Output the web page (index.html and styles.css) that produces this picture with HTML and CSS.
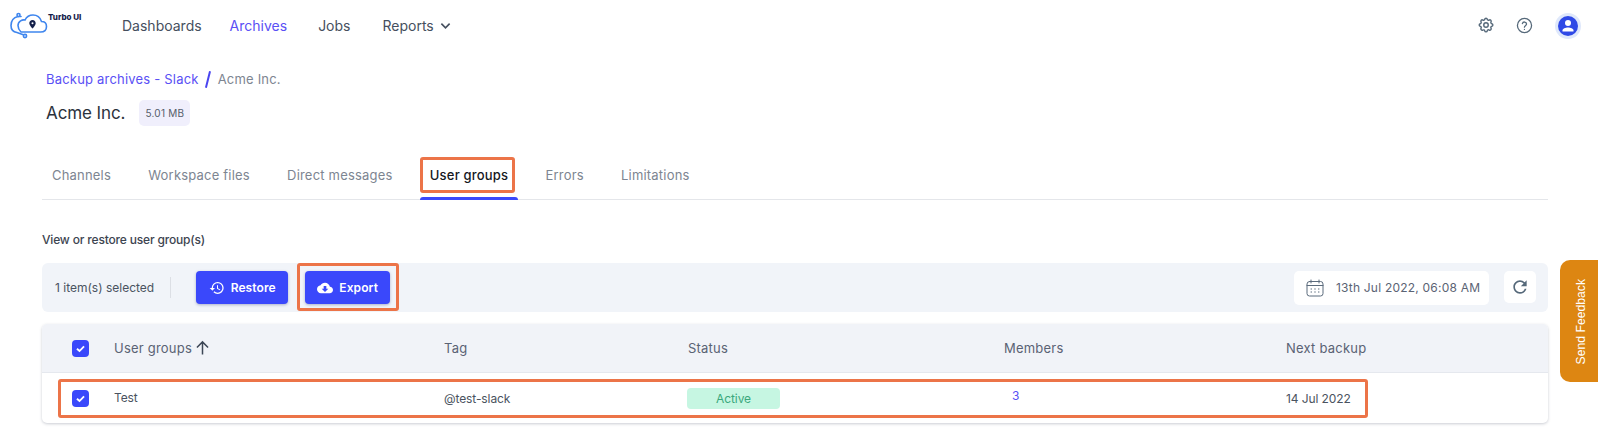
FILE: index.html
```html
<!DOCTYPE html>
<html lang="en">
<head>
<meta charset="utf-8">
<title>Turbo UI</title>
<link rel="stylesheet" href="styles.css">
</head>
<body>
<header class="topbar">
  <a class="brand">
    <svg class="logo" viewBox="0 0 38 28" fill="none" stroke="#3f86ee" stroke-width="1.6" stroke-linecap="round" aria-hidden="true">
      <path d="M8 5.5C4 6.5 1 9.500 1 14.500C1 18.500 3.500 21 7 21.500L14 24"/>
      <path d="M8 5.500H11"/>
      <circle cx="8.500" cy="4" r="1.500" fill="#fff"/>
      <path d="M11 21H30.500C34.500 21 36.500 18.500 36.500 15.500C36.500 12.500 34.500 10.500 31.500 10.500C30 6 27 4 23 4C19 4 16.500 6 15 9C12.500 8.500 8 10 8 14.500C8 17.500 9.500 19.500 11 21Z"/>
      <circle cx="15" cy="25" r="1.600" fill="#fff"/>
      <path d="M22.500 9C20.600 9 19.300 10.400 19.300 12.200C19.300 14.300 22.500 17.500 22.500 17.500C22.500 17.500 25.700 14.300 25.700 12.200C25.700 10.400 24.400 9 22.500 9Z" fill="#14204a" stroke="none"/>
      <circle cx="22.500" cy="12.200" r="1" fill="#fff" stroke="none"/>
    </svg>
    <span class="brand-name">Turbo UI</span>
  </a>
  <nav class="mainnav">
    <a>Dashboards</a>
    <a class="current">Archives</a>
    <a>Jobs</a>
    <a class="has-menu">Reports
      <svg class="chev" viewBox="0 0 12 8" fill="none" stroke="#454f5e" stroke-width="1.800" aria-hidden="true"><path d="M1.500 1.500L6 6L10.500 1.500"/></svg>
    </a>
  </nav>
  <div class="top-icons">
    <svg class="ic-gear" viewBox="0 0 24 24" fill="none" stroke="#56697a" stroke-width="1.900" stroke-linejoin="round" aria-hidden="true">
      <path d="M10.300 4.300c.4-1.800 3-1.800 3.400 0a1.700 1.700 0 0 0 2.600 1.100c1.500-.9 3.300.8 2.400 2.400a1.700 1.700 0 0 0 1.100 2.500c1.800.4 1.800 3 0 3.400a1.700 1.700 0 0 0-1.100 2.600c.9 1.500-.9 3.300-2.400 2.400a1.700 1.700 0 0 0-2.600 1.100c-.4 1.800-3 1.800-3.400 0a1.700 1.700 0 0 0-2.500-1.100c-1.600.9-3.300-.9-2.400-2.400a1.700 1.700 0 0 0-1.100-2.600c-1.800-.4-1.800-3 0-3.400a1.700 1.700 0 0 0 1.100-2.500c-.9-1.600.8-3.300 2.400-2.400 1 .6 2.300.1 2.500-1.100z"/>
      <circle cx="12" cy="12" r="3"/>
    </svg>
    <svg class="ic-help" viewBox="0 0 24 24" fill="none" stroke="#56697a" stroke-width="1.800" stroke-linecap="round" aria-hidden="true">
      <circle cx="12" cy="12" r="10"/>
      <path d="M9 9.300a3 3 0 0 1 5.900.7c0 2-3 2.600-3 4.300"/>
      <path d="M11.900 17.500v.1"/>
    </svg>
    <span class="avatar">
      <svg viewBox="0 0 20 20" fill="#fff" aria-hidden="true">
        <circle cx="10" cy="7" r="3"/>
        <path d="M4.500 14.500c0-2 3-3 5.500-3s5.500 1 5.500 3v1h-11z"/>
      </svg>
    </span>
  </div>
</header>

<main class="page">
  <div class="crumbs">
    <a>Backup archives - Slack</a>
    <span class="slash"></span>
    <span class="crumb-now">Acme Inc.</span>
  </div>
  <div class="title-row">
    <h1>Acme Inc.</h1>
    <span class="size">5.01 MB</span>
  </div>

  <div class="tabs">
    <a>Channels</a>
    <a>Workspace files</a>
    <a>Direct messages</a>
    <a class="active">User groups</a>
    <a>Errors</a>
    <a>Limitations</a>
  </div>

  <p class="hint">View or restore user group(s)</p>

  <div class="toolbar">
    <span class="count">1 item(s) selected</span>
    <span class="divider"></span>
    <button class="btn btn-restore">
      <svg viewBox="0 0 24 24" fill="#fff" aria-hidden="true"><path d="M13 3a9 9 0 0 0-9 9H1l3.890 3.890.070.140L9 12H6c0-3.870 3.130-7 7-7s7 3.130 7 7-3.130 7-7 7c-1.930 0-3.680-.790-4.940-2.060l-1.420 1.420A8.954 8.954 0 0 0 13 21a9 9 0 0 0 0-18zm-1 5v5l4.280 2.540.720-1.210-3.500-2.080V8H12z"/></svg>
      Restore
    </button>
    <button class="btn btn-export">
      <svg viewBox="0 0 24 24" fill="#fff" aria-hidden="true"><path d="M19.350 10.040C18.670 6.590 15.640 4 12 4 9.110 4 6.600 5.640 5.350 8.040 2.340 8.360 0 10.910 0 14c0 3.310 2.690 6 6 6h13c2.760 0 5-2.240 5-5 0-2.640-2.050-4.780-4.650-4.960zM17 13l-5 5-5-5h3V9h4v4h3z"/></svg>
      Export
    </button>
    <div class="date-box">
      <svg viewBox="0 0 18 18" fill="none" stroke="#5b6b7c" stroke-width="1" stroke-linecap="round" aria-hidden="true">
        <rect x="1" y="2.500" width="16" height="14.500" rx="2.500"/>
        <path d="M1 6.500H17M5 1V4M13 1V4"/>
        <path d="M5 10H5.600M8.700 10H9.300M12.400 10H13M5 13H5.600M8.700 13H9.300M12.400 13H13"/>
      </svg>
      <span>13th Jul 2022, 06:08 AM</span>
    </div>
    <button class="refresh">
      <svg viewBox="0 0 24 24" fill="#56697a" aria-hidden="true"><path d="M17.650 6.350A7.958 7.958 0 0 0 12 4c-4.420 0-7.990 3.580-7.990 8s3.570 8 7.990 8c3.730 0 6.840-2.550 7.730-6h-2.080A5.990 5.990 0 0 1 12 18c-3.310 0-6-2.690-6-6s2.690-6 6-6c1.660 0 3.140.690 4.220 1.780L13 11h7V4l-2.350 2.350z"/></svg>
    </button>
  </div>

  <div class="table">
    <div class="tr thead">
      <span class="check"><svg viewBox="0 0 12 12" fill="none" stroke="#fff" stroke-width="1.300"><path d="M3.500 6.200L5.300 7.800L8.500 4.500"/></svg></span>
      <span class="th-sort">User groups
        <svg viewBox="0 0 14 14" fill="none" stroke="#3c4656" stroke-width="1.400" aria-hidden="true"><path d="M7 13V1.500M1.800 6.500L7 1.300L12.200 6.500"/></svg>
      </span>
      <span>Tag</span>
      <span>Status</span>
      <span>Members</span>
      <span>Next backup</span>
    </div>
    <div class="tr tbody">
      <span class="check"><svg viewBox="0 0 12 12" fill="none" stroke="#fff" stroke-width="1.300"><path d="M3.500 6.200L5.300 7.800L8.500 4.500"/></svg></span>
      <span class="name">Test</span>
      <span>@test-slack</span>
      <span><span class="pill">Active</span></span>
      <span><a class="member-link">3</a></span>
      <span>14 Jul 2022</span>
    </div>
  </div>
</main>

<div class="mark mark-tab"></div>
<div class="mark mark-export"></div>
<div class="mark mark-row"></div>

<a class="feedback"><span>Send Feedback</span></a>
</body>
</html>
```
FILE: styles.css
```css
* { box-sizing: border-box; }
html, body { margin: 0; padding: 0; }
body {
  width: 1600px;
  height: 442px;
  overflow: hidden;
  position: relative;
  background: #fff;
  font-family: Inter, "Liberation Sans", sans-serif;
  color: #454f5e;
}
a { text-decoration: none; color: inherit; }

.topbar {
  display: flex;
  align-items: center;
  height: 50px;
  padding: 0 22px 0 10px;
}
.brand { display: flex; align-items: flex-start; width: 112px; height: 27px; margin-top: -1px; }
.logo { width: 38px; height: 28px; }
.brand-name {
  font-size: 8px;
  font-weight: 800;
  color: #14204a;
  margin-top: 1px;
  white-space: nowrap;
}
.mainnav { display: flex; align-items: center; gap: 28px; font-size: 14px; }
.mainnav .current { color: #5a50f5; margin-right: 3px; }
.mainnav .has-menu { display: flex; align-items: center; gap: 6px; margin-left: 4px; }
.chev { width: 11px; height: 8px; margin-top: 2px; }
.top-icons { margin-left: auto; display: flex; align-items: center; }
.ic-gear { width: 18px; height: 18px; margin-right: 21px; }
.ic-help { width: 17px; height: 17px; margin-right: 25px; }
.avatar {
  width: 20px;
  height: 20px;
  border-radius: 50%;
  background: #2f49e6;
  box-shadow: 0 0 0 3px #dfe8fb;
  display: block;
  margin-top: 2px;
}
.avatar svg { display: block; width: 20px; height: 20px; }

.page { padding: 0 52px 0 42px; }
.crumbs {
  display: flex;
  align-items: center;
  height: 20px;
  margin: 19px 0 0 4px;
  font-size: 13px;
  letter-spacing: .2px;
  color: #5a50f5;
}
.slash {
  width: 2px;
  height: 17px;
  margin: 0 9px 0 8px;
  background: #4a45f0;
  transform: rotate(14deg);
}
.crumb-now { color: #7d8591; }
.title-row { display: flex; align-items: center; gap: 14px; margin: 11px 0 0 4px; height: 26px; }
h1 { margin: 0; font-size: 17px; font-weight: 400; letter-spacing: -.1px; color: #2b323c; }
.size {
  display: flex;
  align-items: center;
  justify-content: center;
  width: 51px;
  height: 26px;
  border-radius: 5px;
  background: #f0effc;
  font-size: 10px;
  letter-spacing: .2px;
  color: #555d6a;
}

.tabs {
  display: flex;
  gap: 37.2px;
  height: 49px;
  margin-top: 25px;
  padding-left: 10px;
  border-bottom: 1px solid #e4e6ea;
  font-size: 13px;
  letter-spacing: .2px;
  color: #7d8591;
}
.tabs a { padding-top: 16px; height: 49px; position: relative; }
.tabs .active { color: #15181d; font-weight: 500; }
.tabs .active::after {
  content: "";
  position: absolute;
  left: -10px;
  right: -10px;
  bottom: 0;
  height: 3px;
  border-radius: 3px 3px 0 0;
  background: #3a48fb;
}

.hint { margin: 32px 0 0; font-size: 12px; line-height: 16px; font-weight: 500; letter-spacing: -.17px; color: #3c4450; }

.toolbar {
  display: flex;
  align-items: center;
  height: 49px;
  margin-top: 15px;
  padding: 0 12px 0 13px;
  border-radius: 6px;
  background: #f1f4f9;
}
.count { font-size: 12px; color: #4a5360; }
.divider { width: 1px; height: 21px; margin: 0 25px 0 16px; background: #dcdfe5; }
.btn {
  display: flex;
  align-items: center;
  justify-content: center;
  gap: 6px;
  height: 33px;
  border: 0;
  border-radius: 4px;
  background: #3a48fb;
  color: #fff;
  font: 600 12px Inter, "Liberation Sans", sans-serif;
  letter-spacing: .1px;
  box-shadow: 0 1px 3px rgba(40, 50, 120, .35);
}
.btn svg { width: 16px; height: 16px; }
.btn-restore { width: 92px; margin-right: 17px; }
.btn-export { width: 85px; }
.date-box {
  display: flex;
  align-items: center;
  gap: 12px;
  width: 195px;
  height: 34px;
  margin-left: auto;
  padding-left: 12px;
  border-radius: 5px;
  background: #fff;
  font-size: 12px;
  letter-spacing: .22px;
  color: #5b6374;
}
.date-box svg { width: 18px; height: 20px; }
.refresh {
  display: flex;
  align-items: center;
  justify-content: center;
  width: 32px;
  height: 32px;
  margin-left: 15px;
  margin-top: -2px;
  padding: 0;
  border: 0;
  border-radius: 5px;
  background: #fff;
}
.refresh svg { width: 20px; height: 20px; }

.table {
  width: 1506px;
  margin-top: 12px;
  border-radius: 5px;
  background: #fff;
  box-shadow: 0 1px 3px rgba(70, 75, 100, .28);
}
.tr {
  display: grid;
  grid-template-columns: 42px 330px 244px 316px 282px 1fr;
  align-items: center;
  padding-left: 30px;
}
.thead {
  height: 49px;
  border-radius: 5px 5px 0 0;
  border-bottom: 1px solid #e5e8ee;
  background: #f1f3f8;
  font-size: 13px;
  letter-spacing: .22px;
  color: #5a6274;
}
.tbody { height: 50px; font-size: 12px; letter-spacing: -.1px; color: #4a5360; }
.check {
  display: block;
  width: 17px;
  height: 17px;
  border-radius: 4px;
  background: #3a48fb;
}
.check svg { display: block; width: 17px; height: 17px; }
.th-sort { display: flex; align-items: center; gap: 3px; }
.th-sort svg { width: 15px; height: 16px; }
.name { margin-top: -1px; }
.pill {
  display: flex;
  align-items: center;
  justify-content: center;
  width: 93px;
  height: 21px;
  margin-left: -1px;
  border-radius: 4px;
  background: #c6f6e2;
  color: #3aa87c;
}
.member-link { margin-left: 8px; color: #5a50f5; position: relative; top: -3px; }

.mark {
  position: absolute;
  border: 3px solid #ec7448;
  border-radius: 3px;
  pointer-events: none;
}
.mark-tab { left: 420px; top: 157px; width: 95px; height: 36px; }
.mark-export { left: 297px; top: 263px; width: 102px; height: 48px; }
.mark-row { left: 58px; top: 379px; width: 1310px; height: 39px; }

.feedback {
  position: absolute;
  left: 1560px;
  top: 260px;
  width: 38px;
  height: 122px;
  display: flex;
  align-items: center;
  justify-content: center;
  padding: 2px 0 0 3px;
  border-radius: 10px 0 0 10px;
  background: #dd8612;
  color: #fff;
  font: 12.2px "Liberation Sans", sans-serif;
}
.feedback span {
  writing-mode: vertical-rl;
  transform: rotate(180deg);
  white-space: nowrap;
}
```
